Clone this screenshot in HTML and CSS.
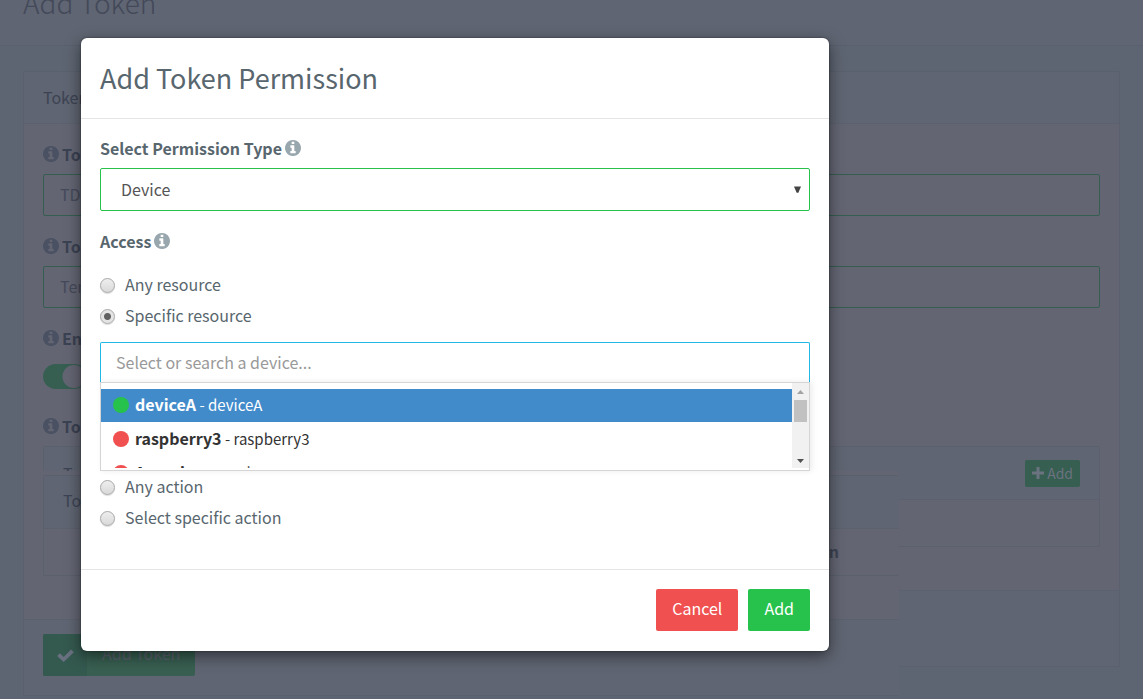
FILE: index.html
```html
<!DOCTYPE html>
<html lang="en">
<head>
<meta charset="utf-8">
<title>Add Token</title>
<link rel="stylesheet" href="styles.css">
</head>
<body>
<svg class="defs" aria-hidden="true">
  <symbol id="info" viewBox="0 0 1536 1536"><path d="M1024 1248v-160q0-14-9-23t-23-9h-96V544q0-14-9-23t-23-9H544q-14 0-23 9t-9 23v160q0 14 9 23t23 9h96v320h-96q-14 0-23 9t-9 23v160q0 14 9 23t23 9h448q14 0 23-9t9-23zM896 352V192q0-14-9-23t-23-9H672q-14 0-23 9t-9 23v160q0 14 9 23t23 9h192q14 0 23-9t9-23zM1536 768q0 209-103 385.500T1153.500 1433 768 1536t-385.500-103T103 1153.500 0 768t103-385.500T382.500 103 768 0t385.500 103T1433 382.500 1536 768z"/></symbol>
</svg>
<div class="page">
  <header class="page-head"><h1>Add Token</h1></header>
  <main class="content">
    <section class="panel">
      <h2 class="panel-head">Token</h2>
      <div class="panel-body">
        <label class="label" for="tid"><svg class="info"><use href="#info"/></svg>Token</label>
        <input class="input" id="tid" value="TDC">
        <label class="label" for="tname"><svg class="info"><use href="#info"/></svg>Token</label>
        <input class="input" id="tname" value="Temp">
        <label class="label" for="ten"><svg class="info"><use href="#info"/></svg>Enable</label>
        <input class="switch" id="ten" type="checkbox" checked>
        <div class="label label-gap"><svg class="info"><use href="#info"/></svg>Token</div>
        <section class="panel">
          <div class="panel-head">Token
            <button class="mini"><svg viewBox="0 0 12 12"><path d="M4.500 0h3v4.500H12v3H7.500V12h-3V7.500H0v-3h4.500z"/></svg>Add</button>
          </div>
          <div class="permissions"></div>
        </section>
      </div>
      <footer class="panel-foot"></footer>
    </section>
  </main>
  <div class="lower">
    <div class="lower-panel">
      <div class="lower-body">
        <section class="panel">
          <div class="panel-head">Token</div>
          <div class="permissions"><b>Action</b></div>
        </section>
      </div>
      <footer class="panel-foot">
        <button class="submit"><span class="tick"><svg viewBox="0 0 18 14"><path d="M0 7.500l3-3 4 4L15 .5l3 3L7 14z"/></svg></span><span class="submit-text">Add Token</span></button>
      </footer>
    </div>
  </div>
</div>

<div class="overlay">
<form class="modal" role="dialog" aria-labelledby="mt">
  <header class="modal-head"><h2 id="mt">Add Token Permission</h2></header>
  <div class="modal-body">
    <label class="label" for="ptype">Select Permission Type<svg class="info"><use href="#info"/></svg></label>
    <div class="select-wrap">
      <select class="select" id="ptype"><option>Device</option></select>
      <svg class="caret" viewBox="0 0 8 8"><path d="M0 0h8L5 7H3z"/></svg>
    </div>
    <div class="label">Access<svg class="info"><use href="#info"/></svg></div>
    <div class="radios">
      <label class="radio"><input type="radio" name="res"><span>Any resource</span></label>
      <label class="radio"><input type="radio" name="res" checked><span>Specific resource</span></label>
    </div>
    <div class="combo">
      <input class="search" aria-label="Device" placeholder="Select or search a device...">
      <div class="menu">
        <ul class="list">
          <li class="item active"><i class="dot on"></i><b>deviceA</b> - deviceA</li>
          <li class="item"><i class="dot"></i><b>raspberry3</b> - raspberry3</li>
          <li class="item"><i class="dot"></i><b>Arancio</b> - Arancio</li>
        </ul>
        <div class="track">
          <svg viewBox="0 0 7 4"><path class="up" d="M0 4h7L3.500 0z"/></svg>
          <div class="thumb"></div>
          <svg viewBox="0 0 7 4"><path d="M0 0h7L3.500 4z"/></svg>
        </div>
      </div>
    </div>
    <div class="actions">
      <label class="radio"><input type="radio" name="act"><span>Any action</span></label>
      <label class="radio"><input type="radio" name="act"><span>Select specific action</span></label>
    </div>
  </div>
  <footer class="modal-foot">
    <button type="button" class="btn red">Cancel</button>
    <button type="button" class="btn">Add</button>
  </footer>
</form>
</div>
</body>
</html>
```
FILE: styles.css
```css
* { box-sizing: border-box; }
body {
  margin: 0;
  font: 16px/24px "Noto Sans CJK SC", "Open Sans", sans-serif;
  color: #58666e;
  background: #5e6572;
}
h1, h2, ul { margin: 0; padding: 0; font-weight: 400; }
input, select, button { font: inherit; color: inherit; margin: 0; }
.defs { position: absolute; width: 0; height: 0; }

.page { position: relative; height: 100vh; overflow: hidden; color: #3d4353; }
.page-head { height: 46px; padding-left: 23px; border-bottom: 1px solid #5a606d; background: #5f6572; display: flex; align-items: flex-end; }
.page-head h1 { font-family: "Noto Sans CJK SC Light", "Noto Sans CJK SC", sans-serif; font-size: 28px; line-height: 36px; font-weight: 300; margin-bottom: 25px; color: #434959; }
.content { padding: 25px 23px; }
.panel { border: 1px solid #5a606d; border-radius: 2px; background: #636573; }
.panel-head { height: 52px; padding: 0 19px 2px; display: flex; align-items: center; justify-content: space-between; font-size: 16px; line-height: 24px; border-bottom: 1px solid #5b616e; background: #5f6572; }
.panel .panel .panel-head { height: 53px; padding-bottom: 0; }
.panel-body { padding: 20px 19px 43px; }
.label { display: flex; align-items: center; gap: 3px; height: 20px; line-height: 20px; font-weight: 700; margin-bottom: 10px; }
.page .label { color: #3b4252; }
.info { flex: none; width: 16px; height: 16px; fill: #98a6ad; }
.page .info { fill: #4a5163; }
.input { display: block; width: 100%; height: 42px; border: 1px solid #355e50; border-radius: 2px; background: none; padding: 0 16px 2px; margin-bottom: 20px; color: #454a5a; }
.switch { appearance: none; display: block; width: 44px; height: 25px; margin-top: 16px; border-radius: 13px; background: radial-gradient(circle at 31px 50%, #646573 11px, #365e51 12px); }
.label-gap { margin-top: 27px; }
.mini { display: flex; align-items: center; gap: 3px; height: 27px; padding: 0 7px 1px; border: 0; border-radius: 2px; background: #365e51; color: #6b7280; font-size: 14px; }
.mini svg { width: 12px; height: 12px; fill: #6b7280; }
.permissions { height: 46px; display: flex; align-items: center; justify-content: flex-end; padding: 0 60px 2px 0; }
.panel-foot { height: 76px; border-top: 1px solid #5b616e; background: #5f6572; }
.lower { position: absolute; left: 0; top: 471px; bottom: 0; width: 899px; overflow: hidden; background: #5e6572; padding-left: 23px; }
.lower-panel { border-left: 1px solid #5a606d; border-bottom: 1px solid #5a606d; background: #636573; }
.lower-body { padding: 4px 0 43px 19px; }
.lower .panel { border-right: 0; }
.lower .panel-head { height: 53px; padding-bottom: 4px; }
.lower .panel-foot { padding: 14px 19px; }
.submit { display: flex; align-items: center; height: 42px; padding: 0; border: 0; border-radius: 2px; background: #385f51; color: #59606d; overflow: hidden; }
.tick { display: flex; align-items: center; justify-content: center; width: 44px; height: 42px; background: #34594f; }
.tick svg { width: 17px; height: 13px; fill: #697180; }
.submit-text { padding: 0 15px 4px; }

.overlay { position: absolute; inset: 0; display: flex; justify-content: center; align-items: flex-start; padding: 38px 314px 0 81px; }
.modal { width: 100%; border-radius: 6px; background: #fff; box-shadow: 0 5px 15px rgba(0, 0, 0, .5), 0 0 2px rgba(0, 0, 0, .5); }
.modal-head { padding: 20px 19px; border-bottom: 1px solid #e5e5e5; }
.modal-head h2 { font-size: 27px; line-height: 40px; }
.modal-body { padding: 19px 19px 35px; }
.select-wrap { position: relative; margin-bottom: 20px; }
.select { appearance: none; display: block; width: 100%; height: 43px; padding: 0 20px 2px; border: 1px solid #27c24c; border-radius: 2px; background: #fff; color: #555; }
.caret { position: absolute; right: 9px; top: 18px; width: 7px; height: 8px; fill: #444; }
.radios { padding: 9px 0 10px; }
.actions { padding-top: 1px; }
.radio { display: flex; align-items: center; gap: 10px; height: 31px; }
.radio span { padding-bottom: 3px; }
.radio input { appearance: none; width: 15px; height: 15px; border: 1px solid #a8a8a8; border-radius: 50%; background: linear-gradient(#eee, #d9d9d9); box-shadow: 0 1px 1px #ddd; }
.radio input:checked { background: radial-gradient(circle, #606060 3px, #e4e4e4 4px); }
.search { display: block; width: 100%; height: 40px; padding: 0 15px 1px; border: 1px solid #23b7e5; border-bottom: 0; border-radius: 2px 2px 0 0; outline: 0; }
.search::placeholder { color: #999; opacity: 1; }
.menu { display: flex; height: 89px; border: 1px solid #d5d5d5; padding-bottom: 2px; box-shadow: 2px 0 6px rgba(0, 0, 0, .08); }
.list { flex: 1; overflow: hidden; padding-top: 6px; list-style: none; color: #333; }
.item { height: 33px; margin-bottom: 1px; padding: 0 0 2px 12px; line-height: 31px; font-size: 15px; white-space: pre; display: flex; align-items: center; }
.item b { font-size: 16px; }
.item.active { background: #428bca; color: #fff; }
.dot { width: 16px; height: 16px; border-radius: 50%; background: #f05050; margin-right: 6px; }
.dot.on { background: #27c24c; }
.track { width: 17px; background: #f1f1f1; display: flex; flex-direction: column; align-items: center; padding: 7px 0 5px; }
.track svg { width: 7px; height: 4px; fill: #505050; }
.track .up { fill: #a3a3a3; }
.thumb { width: 13px; height: 22px; margin: 6px 0 auto; background: #c1c1c1; }
.modal-foot { display: flex; justify-content: flex-end; gap: 10px; padding: 19px 19px 20px; border-top: 1px solid #e5e5e5; }
.btn { height: 42px; padding: 0 16px 4px; border: 0; border-radius: 2px; background: #27c24c; color: #fff; }
.btn.red { background: #f05050; }
```
